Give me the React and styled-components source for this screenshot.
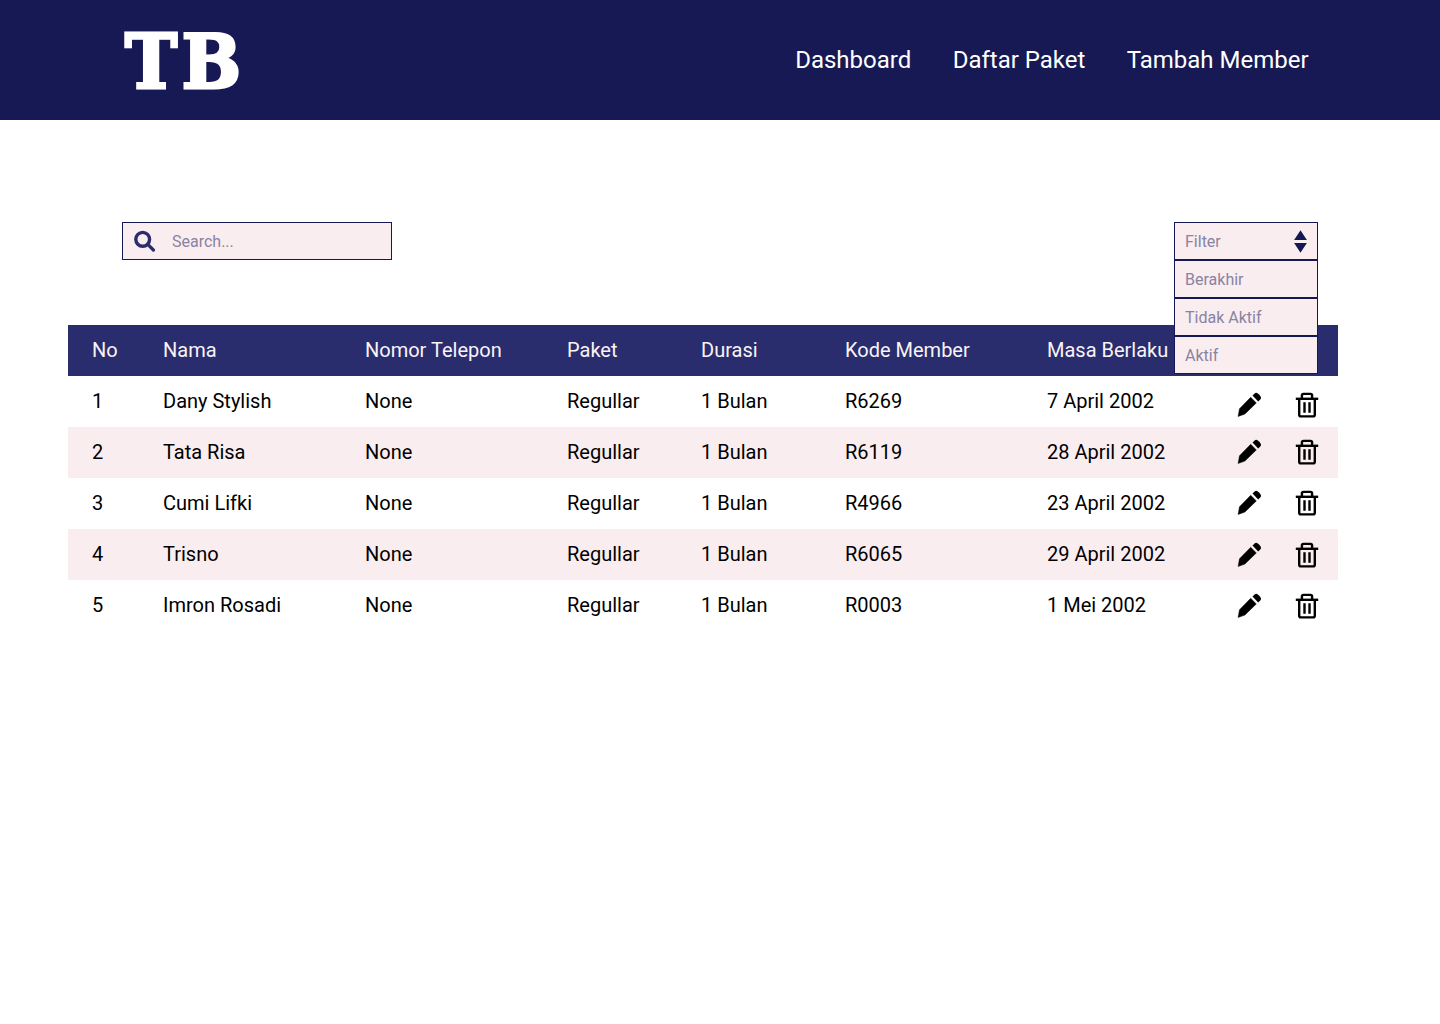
import React from "react";
import styled, { createGlobalStyle } from "styled-components";

const GlobalStyle = createGlobalStyle`
  * { box-sizing: border-box; }
  body { margin: 0; background: #fff; font-family: Roboto, "Liberation Sans", sans-serif; color: #000; }
`;

const Header = styled.header`
  display: flex;
  align-items: center;
  justify-content: space-between;
  height: 120px;
  padding: 0 131.4px 0 125px;
  background: #171955;
  color: #fff;
`;

const Logo = styled.div`
  font: 700 75px/120px "DejaVu Serif", serif;
  letter-spacing: 5px;
  height: 120px;
  padding-top: 2px;
  -webkit-text-stroke: 3.2px #fff;
  transform: scaleX(0.935);
  transform-origin: left;
`;

const Nav = styled.nav`
  display: flex;
  gap: 41.4px;
  font-size: 24px;
  line-height: 28px;
`;

const NavItem = styled.a`
  color: #fff;
  white-space: nowrap;
`;

const Toolbar = styled.div`
  display: flex;
  justify-content: space-between;
  align-items: flex-start;
  height: 205px;
  padding: 102px 122px 0;
`;

const SearchBox = styled.label`
  display: flex;
  align-items: center;
  gap: 16px;
  width: 270px;
  height: 38px;
  padding-left: 11px;
  border: 1px solid #161853;
  background: #faedf0;
`;

const SearchInput = styled.input`
  flex: 1;
  min-width: 0;
  padding: 0;
  border: 0;
  outline: 0;
  background: transparent;
  font: 16px/19px Roboto, sans-serif;
  color: #8883a2;
  &::placeholder { color: #8883a2; opacity: 1; }
`;

const Filter = styled.div`
  position: relative;
  width: 144px;
`;

const FilterMenu = styled.div`
  position: absolute;
  top: 100%;
  left: 0;
  width: 100%;
  z-index: 1;
`;

const FilterBox = styled.div`
  display: flex;
  align-items: center;
  justify-content: space-between;
  height: 38px;
  padding: 0 10px;
  border: 1px solid #161853;
  background: #faedf0;
  font-size: 16px;
  line-height: 19px;
  color: #8883a2;
`;

const Table = styled.div`
  width: 1270px;
  margin-left: 68px;
  font-size: 20px;
  line-height: 23px;
`;

const Row = styled.div`
  display: grid;
  grid-template-columns: 71px 202px 202px 134px 144px 202px 190px 1fr;
  height: 51px;
  padding-left: 24px;
  align-items: center;
  background: ${(p) => (p.$head ? "#292c6d" : p.$tinted ? "#faedf0" : "#fff")};
  color: ${(p) => (p.$head ? "#faf3f6" : "#000")};
`;

const Cell = styled.div`
  white-space: nowrap;
`;

const Actions = styled.div`
  display: flex;
  align-self: start;
  gap: 31px;
  padding-top: ${(p) => p.$top}px;
`;

const SearchIcon = () => (
  <svg width="22" height="22" viewBox="0 0 22 22" fill="none" stroke="#292c6d">
    <circle cx="8.7" cy="9.3" r="6.9" strokeWidth="3.4" />
    <path d="M14 14.6L19.4 20" strokeWidth="3.2" strokeLinecap="round" />
  </svg>
);

const SortIcon = () => (
  <svg width="14" height="23" viewBox="0 0 14 23" fill="#161853">
    <path d="M7.5 0.3L13.9 9.9H1.1ZM7.5 22.7L1.1 13H13.9Z" />
  </svg>
);

const PencilIcon = () => (
  <svg width="26" height="26" viewBox="0 0 26 26">
    <path d="M1.1 24.4L2.5 16.8L13.7 5.3L19.3 10.9L7.9 22.1Z" stroke="#000" strokeWidth=".5" strokeLinejoin="round" />
    <path d="M15.5 3.6L17.7 1.4Q18.9.4 20.1 1.1Q22.7 2.8 23.9 5.1Q24.4 6.3 23.4 7.3L21.2 9.4Z" />
  </svg>
);

const TrashIcon = () => (
  <svg width="26" height="26" viewBox="0 0 26 26" fill="none" stroke="#000" strokeWidth="2.4">
    <path d="M1.8 6.8H24.2" />
    <path d="M7.9 6.5V3.5Q7.9 1.9 9.5 1.9H16.5Q18.1 1.9 18.1 3.5V6.5" />
    <path d="M5.2 7V22.8Q5.2 24.4 6.8 24.4H19.2Q20.8 24.4 20.8 22.8V7" />
    <path d="M10.5 10.3V20.8M15.5 10.3V20.8" />
  </svg>
);

const headings = ["No", "Nama", "Nomor Telepon", "Paket", "Durasi", "Kode Member", "Masa Berlaku"];

const members = [
  { name: "Dany Stylish", code: "R6269", until: "7 April 2002", iconTop: 16 },
  { name: "Tata Risa", code: "R6119", until: "28 April 2002", iconTop: 12 },
  { name: "Cumi Lifki", code: "R4966", until: "23 April 2002", iconTop: 12 },
  { name: "Trisno", code: "R6065", until: "29 April 2002", iconTop: 13 },
  { name: "Imron Rosadi", code: "R0003", until: "1 Mei 2002", iconTop: 13 },
];

export default function App() {
  return (
    <>
      <GlobalStyle />
      <Header>
        <Logo>TB</Logo>
        <Nav>
          <NavItem>Dashboard</NavItem>
          <NavItem>Daftar Paket</NavItem>
          <NavItem>Tambah Member</NavItem>
        </Nav>
      </Header>
      <Toolbar>
        <SearchBox>
          <SearchIcon />
          <SearchInput placeholder="Search..." />
        </SearchBox>
        <Filter>
          <FilterBox>
            Filter
            <SortIcon />
          </FilterBox>
          <FilterMenu>
            {["Berakhir", "Tidak Aktif", "Aktif"].map((label) => (
              <FilterBox key={label}>{label}</FilterBox>
            ))}
          </FilterMenu>
        </Filter>
      </Toolbar>
      <Table>
        <Row $head>
          {headings.map((h) => (
            <Cell key={h}>{h}</Cell>
          ))}
        </Row>
        {members.map((m, i) => (
          <Row key={m.code} $tinted={i % 2 === 1}>
            <Cell>{i + 1}</Cell>
            <Cell>{m.name}</Cell>
            <Cell>None</Cell>
            <Cell>Regullar</Cell>
            <Cell>1 Bulan</Cell>
            <Cell>{m.code}</Cell>
            <Cell>{m.until}</Cell>
            <Actions $top={m.iconTop}>
              <PencilIcon />
              <TrashIcon />
            </Actions>
          </Row>
        ))}
      </Table>
    </>
  );
}
